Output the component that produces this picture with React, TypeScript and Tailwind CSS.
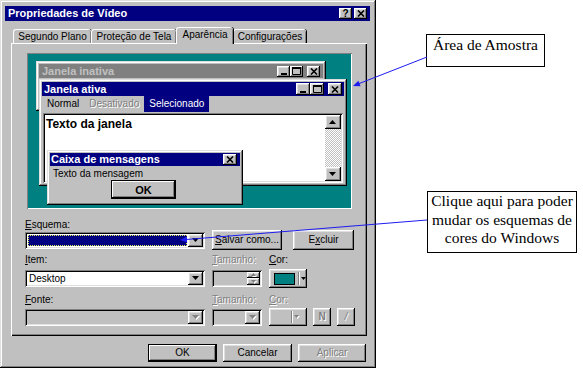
import React from "react";

const raised =
  "shadow-[inset_-1px_-1px_0_#000,inset_1px_1px_0_#fff,inset_-2px_-2px_0_#808080,inset_2px_2px_0_#dfdfdf]";
const sunken =
  "shadow-[inset_1px_1px_0_#808080,inset_-1px_-1px_0_#fff,inset_2px_2px_0_#000,inset_-2px_-2px_0_#dfdfdf]";
const frame =
  "shadow-[inset_-1px_-1px_0_#000,inset_1px_1px_0_#dfdfdf,inset_-2px_-2px_0_#808080,inset_2px_2px_0_#fff]";
const defaultBtn =
  "shadow-[inset_0_0_0_1px_#000,inset_-2px_-2px_0_#000,inset_2px_2px_0_#fff,inset_-3px_-3px_0_#808080]";
const dim = "text-[#808080] [text-shadow:1px_1px_0_#fff]";

function Btn({ className, children }: { className: string; children?: React.ReactNode }) {
  return (
    <div className={`flex shrink-0 items-center justify-center bg-[#c0c0c0] ${raised} ${className}`}>
      {children}
    </div>
  );
}

const CloseGlyph = () => (
  <svg width="8" height="7" viewBox="0 0 8 7">
    <path d="M1 0.5L7 6.5M7 0.5L1 6.5" stroke="#000" strokeWidth="1.6" />
  </svg>
);

const MinGlyph = () => (
  <svg width="6" height="7" viewBox="0 0 6 7">
    <rect x="0" y="5" width="6" height="2" fill="#000" />
  </svg>
);

const MaxGlyph = () => (
  <svg width="9" height="8" viewBox="0 0 9 8">
    <path d="M0.5 0.5h8v7h-8z" fill="none" stroke="#000" />
    <rect x="0" y="0" width="9" height="2" fill="#000" />
  </svg>
);

function Arrow({ up, off, w = 7 }: { up?: boolean; off?: boolean; w?: number }) {
  const h = Math.ceil(w / 2);
  const d = up ? `M0 ${h}h${w}L${w / 2} 0z` : `M0 0h${w}L${w / 2} ${h}z`;
  return (
    <svg width={w + 1} height={h + 1} viewBox={`0 0 ${w + 1} ${h + 1}`}>
      {off && <path d={d} fill="#fff" transform="translate(1 1)" />}
      <path d={d} fill={off ? "#808080" : "#000"} />
    </svg>
  );
}

function Combo({ className, off, children }: { className: string; off?: boolean; children?: React.ReactNode }) {
  return (
    <div className={`flex h-[17px] shrink-0 p-[2px] ${off ? "bg-[#c0c0c0]" : "bg-white"} ${sunken} ${className}`}>
      <div className="flex min-w-0 flex-1 items-center">{children}</div>
      <Btn className="h-[13px] w-[15px]">
        <Arrow off={off} />
      </Btn>
    </div>
  );
}

function Tab({ w, children }: { w: string; children: React.ReactNode }) {
  return (
    <div
      className={`flex h-[14px] items-center justify-center rounded-t-[3px] border-l border-t border-l-white border-t-white shadow-[inset_-1px_0_0_#808080,1px_0_0_#000] ${w}`}
    >
      {children}
    </div>
  );
}

function Preview() {
  return (
    <div className="relative ml-[2px] h-[156px] w-[325px] bg-[#008080] shadow-[inset_1px_1px_0_#808080,inset_-1px_-1px_0_#fff]">
      {/* janela inativa */}
      <div className={`absolute left-[9px] top-[8px] h-[50px] w-[290px] bg-[#c0c0c0] p-[3px] ${frame}`}>
        <div className="flex h-[14px] items-center justify-between bg-[#808080] pl-[3px] pr-[3px]">
          <span className="text-[11px] font-bold leading-none text-[#c0c0c0]">Janela inativa</span>
          <div className="flex">
            <Btn className="h-[11px] w-[13px]">
              <MinGlyph />
            </Btn>
            <Btn className="h-[11px] w-[13px]">
              <MaxGlyph />
            </Btn>
            <Btn className="ml-[4px] h-[11px] w-[13px]">
              <CloseGlyph />
            </Btn>
          </div>
        </div>
      </div>

      {/* janela ativa */}
      <div className={`absolute left-[12px] top-[26px] h-[107px] w-[308px] bg-[#c0c0c0] p-[3px] ${frame}`}>
        <div className="flex h-[14px] items-center justify-between bg-[#000080] pl-[2px] pr-[2px]">
          <span className="text-[11px] font-bold leading-none text-white">Janela ativa</span>
          <div className="flex">
            <Btn className="h-[12px] w-[14px]">
              <MinGlyph />
            </Btn>
            <Btn className="h-[12px] w-[14px]">
              <MaxGlyph />
            </Btn>
            <Btn className="ml-[4px] h-[12px] w-[14px]">
              <CloseGlyph />
            </Btn>
          </div>
        </div>
        <div className="flex h-[16px] items-stretch">
          <span className="flex items-center px-[5px]">Normal</span>
          <span className={`flex items-center px-[5px] ${dim}`}>Desativado</span>
          <span className="flex items-center bg-[#000080] px-[5px] text-white">Selecionado</span>
        </div>
        <div className={`mx-[1px] mt-[1px] flex h-[70px] bg-white p-[2px] ${sunken}`}>
          <div className="flex-1 pl-[1px] pt-[2px] text-[12px] font-bold leading-[14px]">Texto da janela</div>
          <div className="flex w-[16px] flex-col">
            <Btn className="h-[14px] w-[16px]">
              <Arrow up w={7} />
            </Btn>
            <div className="flex-1 bg-[repeating-conic-gradient(#c0c0c0_0_25%,#fff_0_50%)] bg-[length:2px_2px]" />
            <Btn className="h-[14px] w-[16px]">
              <Arrow w={7} />
            </Btn>
          </div>
        </div>
      </div>

      {/* caixa de mensagens */}
      <div className={`absolute left-[20px] top-[97px] h-[55px] w-[196px] bg-[#c0c0c0] p-[3px] ${frame}`}>
        <div className="flex h-[13px] items-center justify-between bg-[#000080] pl-[1px] pr-[3px]">
          <span className="text-[11px] font-bold leading-none text-white">Caixa de mensagens</span>
          <Btn className="h-[11px] w-[14px]">
            <CloseGlyph />
          </Btn>
        </div>
        <div className="mt-[2px] h-[12px] pl-[3px]">Texto da mensagem</div>
        <div className="flex justify-center">
          <div className={`ml-[-3px] flex h-[19px] w-[65px] items-center justify-center bg-[#c0c0c0] text-[11px] font-bold ${defaultBtn}`}>
            OK
          </div>
        </div>
      </div>
    </div>
  );
}

function Dialog() {
  return (
    <div className={`h-[368px] w-[376px] shrink-0 bg-[#c0c0c0] p-[2px] ${frame}`}>
      <div className="ml-[3px] mr-[4px] mt-[4px] flex h-[15px] items-center justify-between bg-[#000080] pl-[3px] pr-[3px]">
        <span className="text-[11px] font-bold leading-none text-white">Propriedades de Vídeo</span>
        <div className="flex gap-[2px]">
          <Btn className="h-[11px] w-[13px]">
            <span className="text-[10px] font-bold leading-none">?</span>
          </Btn>
          <Btn className="h-[11px] w-[13px]">
            <CloseGlyph />
          </Btn>
        </div>
      </div>

      <div className="ml-[11px] mt-[6px] flex h-[16px] items-end">
        <Tab w="w-[78px]">Segundo Plano</Tab>
        <Tab w="w-[85px]">Proteção de Tela</Tab>
        <div className="relative z-10 mb-[-1px] flex h-[17px] w-[57px] items-start justify-center rounded-t-[3px] border-l border-t border-l-white border-t-white bg-[#c0c0c0] pt-[1px] shadow-[inset_-1px_0_0_#808080,1px_0_0_#000]">
          Aparência
        </div>
        <Tab w="w-[73px]">Configurações</Tab>
      </div>

      <div className="ml-[9px] h-[293px] w-[356px] pl-[14px] pt-[10px] shadow-[inset_1px_1px_0_#fff,inset_-1px_-1px_0_#000,inset_-2px_-2px_0_#808080]">
        <Preview />

        <div className="mt-[10px] h-[11px]">
          <span className="underline">E</span>squema:
        </div>
        <div className="flex h-[20px] items-center">
          <Combo className="w-[180px]">
            <div className="mx-[1px] h-[11px] flex-1 border border-dotted border-[#e8e850] bg-[#000080]" />
          </Combo>
          <Btn className="ml-[7px] h-[20px] w-[70px]">
            <span>
              <span className="underline">S</span>alvar como...
            </span>
          </Btn>
          <Btn className="ml-[11px] h-[20px] w-[61px]">
            <span>
              E<span className="underline">x</span>cluir
            </span>
          </Btn>
        </div>

        <div className="mt-[4px] flex h-[11px]">
          <span className="w-[187px]">
            <span className="underline">I</span>tem:
          </span>
          <span className={`w-[57px] ${dim}`}>
            <span className="underline">T</span>amanho:
          </span>
          <span>
            <span className="underline">C</span>or:
          </span>
        </div>
        <div className="mt-[4px] flex h-[19px] items-center">
          <Combo className="w-[180px]">
            <span className="pl-[2px]">Desktop</span>
          </Combo>
          <div className={`ml-[7px] flex h-[17px] w-[50px] justify-end bg-[#c0c0c0] p-[2px] ${sunken}`}>
            <div className="flex w-[13px] flex-col">
              <Btn className="h-[6px] w-[13px]">
                <Arrow up off w={5} />
              </Btn>
              <Btn className="h-[7px] w-[13px]">
                <Arrow off w={5} />
              </Btn>
            </div>
          </div>
          <Btn className="ml-[7px] h-[19px] w-[38px] !justify-start pl-[5px]">
            <div className="h-[12px] w-[21px] border border-black bg-[#008080]" />
            <div className="ml-[3px] h-[13px] w-[2px] border-l border-l-[#808080] border-r border-r-white" />
            <div className="ml-[1px]">
              <Arrow w={5} />
            </div>
          </Btn>
        </div>

        <div className="mt-[6px] flex h-[11px]">
          <span className="w-[187px]">
            <span className="underline">F</span>onte:
          </span>
          <span className={`w-[57px] ${dim}`}>
            <span className="underline">T</span>amanho:
          </span>
          <span className={dim}>
            <span className="underline">C</span>or:
          </span>
        </div>
        <div className="mt-[3px] flex h-[18px] items-center">
          <Combo className="w-[180px]" off />
          <Combo className="ml-[7px] w-[50px]" off />
          <Btn className="ml-[7px] h-[18px] w-[38px] !justify-start pl-[22px]">
            <div className="h-[12px] w-[2px] border-l border-l-[#808080] border-r border-r-white" />
            <div className="ml-[1px]">
              <Arrow off w={5} />
            </div>
          </Btn>
          <Btn className={`ml-[6px] h-[18px] w-[18px] font-bold ${dim}`}>N</Btn>
          <Btn className={`ml-[6px] h-[18px] w-[18px] italic ${dim}`}>/</Btn>
        </div>
      </div>

      <div className="mr-[8px] mt-[8px] flex justify-end gap-[6px]">
        <div className={`flex h-[18px] w-[69px] items-center justify-center bg-[#c0c0c0] ${defaultBtn}`}>OK</div>
        <Btn className="h-[18px] w-[69px]">Cancelar</Btn>
        <Btn className={`h-[18px] w-[68px] ${dim}`}>Aplicar</Btn>
      </div>
    </div>
  );
}

function Notes() {
  return (
    <div className="flex flex-col font-['Liberation_Serif','Times_New_Roman',serif] text-[15.5px] leading-[18px] text-black">
      <div className="ml-[50px] mt-[34px] h-[33px] w-[119px] border border-black pt-[1px] text-center">
        Área de Amostra
      </div>
      <div className="ml-[51px] mt-[124px] h-[62px] w-[150px] border border-black text-center leading-[18.5px]">
        <div>Clique aqui para poder</div>
        <div>mudar os esquemas de</div>
        <div>cores do Windows</div>
      </div>
    </div>
  );
}

function Arrows() {
  return (
    <svg className="pointer-events-none absolute inset-0" width="583" height="374" viewBox="0 0 583 374">
      <g stroke="#1c1cf0" strokeWidth="1" fill="#1c1cf0">
        <line x1="427" y1="57" x2="358" y2="84" />
        <polygon points="353,86 360.6,86.3 358.4,80.7" stroke="none" />
        <line x1="427" y1="220" x2="185" y2="239.6" />
        <polygon points="180,240 187.2,242.4 186.8,236.4" stroke="none" />
      </g>
    </svg>
  );
}

export default function App() {
  return (
    <div className="relative flex h-[374px] w-[583px] overflow-hidden bg-white font-['Liberation_Sans',Arial,sans-serif] text-[10px] leading-[12px] text-black">
      <Dialog />
      <Notes />
      <Arrows />
    </div>
  );
}
